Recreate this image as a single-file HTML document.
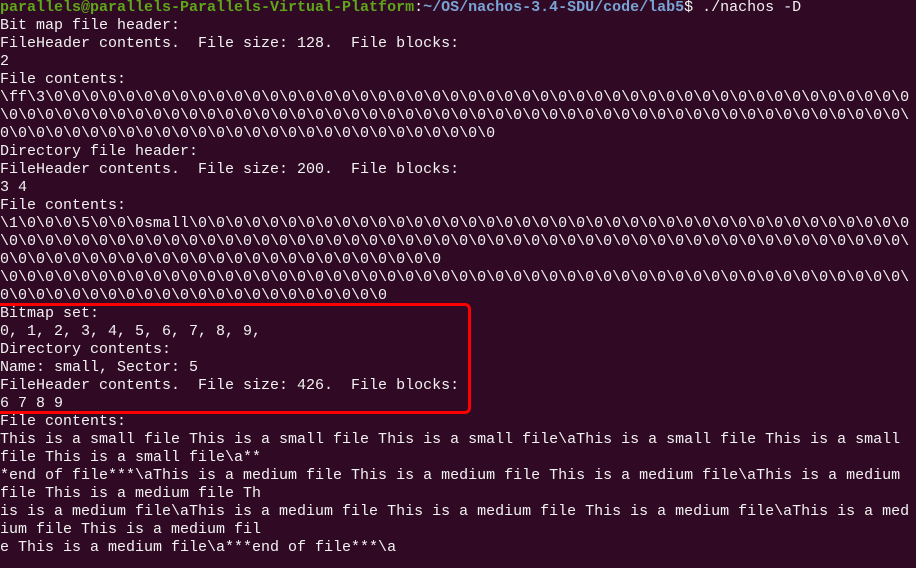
<!DOCTYPE html>
<html><head><meta charset="utf-8"><style>
html,body{margin:0;padding:0;width:916px;height:568px;overflow:hidden;background:#300a24;}
pre{margin:0;position:absolute;left:0;top:-1px;font-family:"Liberation Mono",monospace;font-size:15px;line-height:18px;color:#f2f2f2;white-space:pre;}
.g{color:#5fa61a;font-weight:bold}
.b{color:#7aa3d6;font-weight:bold}
.box{position:absolute;left:-6px;top:303px;width:471px;height:105px;border:3px solid #f00;border-radius:6px;}
</style></head><body>
<pre id="t"></pre>
<div class="box"></div>
<script>
function z(n){return "\\0".repeat(n);}
var L=[];
L.push('<span class="g">parallels@parallels-Parallels-Virtual-Platform</span>:<span class="b">~/OS/nachos-3.4-SDU/code/lab5</span>$ ./nachos -D');
L.push("Bit map file header:");
L.push("FileHeader contents.  File size: 128.  File blocks:");
L.push("2");
L.push("File contents:");
L.push("\\ff\\3"+z(48));
L.push(z(50)+"\\");
L.push("0"+z(27));
L.push("Directory file header:");
L.push("FileHeader contents.  File size: 200.  File blocks:");
L.push("3 4");
L.push("File contents:");
L.push("\\1\\0\\0\\0\\5\\0\\0\\0small"+z(40));
L.push(z(50)+"\\");
L.push("0"+z(24));
L.push(z(50)+"\\");
L.push("0"+z(21));
L.push("Bitmap set:");
L.push("0, 1, 2, 3, 4, 5, 6, 7, 8, 9,");
L.push("Directory contents:");
L.push("Name: small, Sector: 5");
L.push("FileHeader contents.  File size: 426.  File blocks:");
L.push("6 7 8 9");
L.push("File contents:");
L.push("This is a small file This is a small file This is a small file\\aThis is a small file This is a small");
L.push("file This is a small file\\a**");
L.push("*end of file***\\aThis is a medium file This is a medium file This is a medium file\\aThis is a medium");
L.push("file This is a medium file Th");
L.push("is is a medium file\\aThis is a medium file This is a medium file This is a medium file\\aThis is a med");
L.push("ium file This is a medium fil");
L.push("e This is a medium file\\a***end of file***\\a");
document.getElementById("t").innerHTML=L.join("\n");
</script>
</body></html>
